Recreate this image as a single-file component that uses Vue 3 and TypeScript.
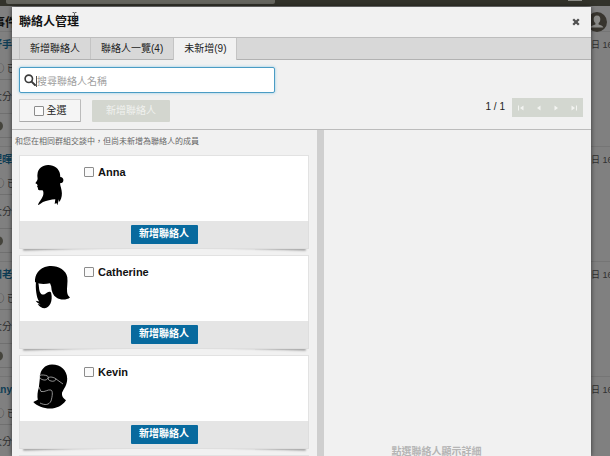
<script setup lang="ts">
import { ref, computed } from 'vue'

interface Contact {
  name: string
  kind: 'anna' | 'catherine' | 'kevin' | 'plain'
}

interface Thread {
  author: string
  date: string
}

const tabs: string[] = ['新增聯絡人', '聯絡人一覽(4)', '未新增(9)']
const activeTab = ref<number>(2)
const keyword = ref<string>('')
const selected = ref<string[]>([])

const contacts: Contact[] = [
  { name: 'Anna', kind: 'anna' },
  { name: 'Catherine', kind: 'catherine' },
  { name: 'Kevin', kind: 'kevin' },
  { name: '', kind: 'plain' },
]

const threads: Thread[] = [
  { author: '好手', date: '日 16' },
  { author: '理暉', date: '日 16' },
  { author: '和老', date: '日 16' },
  { author: 'any', date: '日 16' },
]

const allSelected = computed<boolean>({
  get: () => selected.value.length === contacts.length,
  set: (on) => {
    selected.value = on ? contacts.map((c) => c.name) : []
  },
})
</script>

<template>
  <div class="screen">
    <div class="backdrop">
      <div class="topbar">
        <div class="topbar-search"></div>
        <div class="topbar-mark"></div>
      </div>
      <div class="page-head">
        <span class="edge wide"><b>事件</b></span>
        <svg class="me" viewBox="0 0 20 20">
          <circle cx="10" cy="10" r="10" fill="#38352e" />
          <path d="M10 3.500c-2.500 0-3.500 1.800-3.300 4 .1 1.700.8 2.900 1.700 3.600v1.500c-2 .7-4 1.200-4.800 2.900h12.800c-.8-1.700-2.800-2.200-4.800-2.900v-1.500c.9-.7 1.600-1.900 1.700-3.600.2-2.200-.8-4-3.300-4z" fill="#8b8b88" />
        </svg>
      </div>
      <div v-for="t in threads" :key="t.author" class="thread">
        <div class="t-row t-name">
          <span class="edge author">{{ t.author }}</span>
          <span class="date">{{ t.date }}</span>
        </div>
        <div class="t-row t-state"><span class="edge wide">◯ 已</span></div>
        <div class="t-row t-text"><span class="edge">大分</span></div>
        <div class="t-row t-reply"><span class="dot"></span></div>
      </div>
    </div>

    <section class="modal" role="dialog" aria-labelledby="dlg-title">
      <header class="head">
        <h1 id="dlg-title">聯絡人管理</h1>
        <button class="close" type="button" aria-label="關閉">
          <svg viewBox="0 0 8 8"><path d="M1.200 1.200L6.800 6.800M6.800 1.200L1.200 6.800" stroke="#505050" stroke-width="2.300" /></svg>
        </button>
        <svg class="ibeam" viewBox="0 0 5 10">
          <path d="M.5.5h1.500l.5.6.5-.6h1.500M2.500 1v8M.5 9.500h1.500l.5-.6.5.6h1.500" fill="none" stroke="#444" stroke-width=".8" />
        </svg>
      </header>

      <nav class="tabs">
        <button
          v-for="(label, i) in tabs"
          :key="label"
          type="button"
          class="tab"
          :class="{ active: i === activeTab }"
          @click="activeTab = i"
        >{{ label }}</button>
      </nav>

      <div class="tools">
        <label class="search">
          <svg viewBox="0 0 12 12">
            <circle cx="4.800" cy="4.800" r="3.700" fill="none" stroke="#3c3c3c" stroke-width="1.600" />
            <path d="M7.600 7.600l3.400 3.400" stroke="#3c3c3c" stroke-width="2" stroke-linecap="round" />
          </svg>
          <span class="caret"></span>
          <input v-model="keyword" type="text" placeholder="搜尋聯絡人名稱" aria-label="搜尋聯絡人名稱" />
        </label>
        <div class="actions">
          <label class="all"><input v-model="allSelected" type="checkbox" />全選</label>
          <button class="add-all" type="button" disabled>新增聯絡人</button>
          <span class="count">1 / 1</span>
          <div class="pager">
            <button type="button" disabled aria-label="第一頁"><svg viewBox="0 0 6 6"><path d="M0 .5h1v5H0zM5.500.5v5L2 3z" /></svg></button>
            <button type="button" disabled aria-label="上一頁"><svg viewBox="0 0 6 6"><path d="M4.500.5v5L1 3z" /></svg></button>
            <button type="button" disabled aria-label="下一頁"><svg viewBox="0 0 6 6"><path d="M1.500.5v5L5 3z" /></svg></button>
            <button type="button" disabled aria-label="最後一頁"><svg viewBox="0 0 6 6"><path d="M5 .5h1v5H5zM.5.5v5L4 3z" /></svg></button>
          </div>
        </div>
      </div>

      <div class="body">
        <div class="list">
          <p class="hint">和您在相同群組交談中，但尚未新增為聯絡人的成員</p>
          <article v-for="c in contacts" :key="c.kind" class="card">
            <div class="card-main">
              <svg class="portrait" viewBox="0 0 50 50">
                <g v-if="c.kind === 'anna'">
                  <path d="M12.500 14C13 8.500 17.500 5.200 23 5c6-.2 11.200 3.600 12 9l.3 3c1.900.2 3.200 1.500 3.100 3.300-.1 2-1.500 3.200-3.400 3 .4 3.500 1.800 6 1.900 10 .1 4-1.300 7-2.700 8.600l-.3-2.600-1.500 6-1-2.200-1.700 1 .6-4.800c-4.300.4-8.500 1-12.300 2.800-1.500.8-2.700 2-4.500 2.800L13 44.500c1.200-3 4-5.500 5-8.700.7-2.100.5-4.300-.2-5.200-1.300-.8-3 .2-4.200-.7-.9-.7-.5-1.700-.8-2.500l-.8-.7.6-1-.5-1.500c-1-.6-2-.7-1.500-1.500.7-1 1.900-2.200 2-3.700.1-1.600-.5-3-.1-5z" />
                </g>
                <g v-else-if="c.kind === 'catherine'">
                  <path d="M10 22C9.500 15 14 7.500 23 6.200c9-1.300 18 3.200 19.300 11 .7 5-.7 10.700-.2 14.800.3 3 1.600 4.400 2.900 5.500-3.200 2.600-9.500 3-13.600.1-3.300-2.500-5-6-5.200-11.200-.2-1-.6-1.400-1.200-3.200-4.700 1-11.100 1.200-15-1.200z" />
                  <path d="M11 22l2.200.6c1.200 3.900.2 8.400 3 11.400 2 1.500 4 0 6-1.500 1.800-1 3.600-1 4 .8 1.800 7.500-1.400 14.500-6.500 15-3-.1-5.400-2-7-4.300l2.800.6c-2-1-3.500-2-4.800-3.800l3.500.7c-2.900-3.500-3.900-14.500-3.200-19.500z" />
                </g>
                <g v-else-if="c.kind === 'kevin'">
                  <path d="M15 17c0-7 5-12.500 12-12.500 9 0 15 6 15.200 14 .1 6.500-3.200 10-5.200 14.200-.4 4 1.500 5.300 4 7.500-3.500 5.500-9.500 8.300-16 8.300S12 46 8.300 42l4.500-2.300c-.7-3.500-.3-8.200 1-12z" />
                  <path d="M14.500 15.500c2-1 6-.5 8 .5 2 2-1 4.500-3.500 4-3-.5-5-2-4.500-4.500zM23 18c2-2 6-.5 8 .8 0 2-3 3-5 2.200-2-.5-3-1.500-3-3zM31 19l7 5M14 27l2 4.500c4 1 7-2.500 10-1.500 2 1 1.500 6 0 11-2 4-6 4.500-11 2" fill="none" stroke="#ccc" stroke-width=".7" />
                </g>
              </svg>
              <label class="person"><input v-model="selected" type="checkbox" :value="c.name" :aria-label="c.name" />{{ c.name }}</label>
            </div>
            <footer class="card-foot"><button class="primary" type="button">新增聯絡人</button></footer>
          </article>
        </div>
        <div class="detail"><p>點選聯絡人顯示詳細</p></div>
      </div>
    </section>
  </div>
</template>

<style>
body {
  overflow: hidden;
}
</style>

<style scoped>
* {
  box-sizing: border-box;
}
.screen {
  position: relative;
  height: 100vh;
  overflow: hidden;
  font: 10px/14px "Liberation Sans", "Noto Sans CJK TC", sans-serif;
  color: #222;
}
button,
input {
  font: inherit;
  color: inherit;
  margin: 0;
  padding: 0;
}
h1,
p {
  margin: 0;
}
.backdrop {
  background: #808080;
  height: 100%;
  overflow: hidden;
}
.topbar {
  display: flex;
  height: 6px;
  padding: 0 28px 0 6px;
  justify-content: space-between;
  background: #33332b;
}
.topbar-search {
  width: 269px;
  height: 4px;
  background: #66665f;
  border-radius: 0 0 2px 2px;
}
.topbar-mark {
  width: 14px;
  height: 1px;
  background: #8b8b86;
}
.page-head {
  display: flex;
  justify-content: space-between;
  height: 25px;
  padding-top: 6px;
}
.page-head b {
  color: #111;
  font-size: 12px;
}
.page-head .edge {
  line-height: 22px;
}
.me {
  width: 20px;
  height: 20px;
  margin-right: 3px;
}
.edge {
  display: flex;
  justify-content: flex-end;
  width: 12px;
  white-space: nowrap;
}
.edge.wide {
  width: 17px;
}
.thread {
  height: 115px;
  border-top: 1px solid #757575;
}
.t-row {
  display: flex;
  justify-content: space-between;
  align-items: center;
  border-bottom: 1px solid #707070;
  color: #303030;
}
.t-name {
  height: 26px;
  border-bottom: 0;
}
.author {
  color: #0e3d55;
  font-weight: bold;
}
.date {
  width: 19px;
  white-space: nowrap;
  font-size: 9px;
}
.t-state {
  height: 22px;
}
.t-text {
  height: 34px;
}
.t-reply {
  height: 24px;
}
.t-state,
.t-text,
.t-reply {
  margin-right: 19px;
}
.dot {
  width: 10px;
  height: 10px;
  margin-left: -7px;
  border-radius: 50%;
  background: #45443c;
}
.modal {
  position: absolute;
  top: 7px;
  left: 12px;
  right: 19px;
  bottom: 0;
  display: flex;
  flex-direction: column;
  background: #f1f1f1;
  box-shadow: 0 0 5px rgba(0, 0, 0, 0.6);
}
.head {
  position: relative;
  display: flex;
  flex: none;
  align-items: center;
  justify-content: space-between;
  height: 30px;
  padding: 0 11px 0 7px;
}
.head h1 {
  font-size: 12px;
  line-height: 16px;
  color: #111;
}
.close {
  display: flex;
  border: 0;
  background: none;
}
.close svg {
  width: 8px;
  height: 8px;
}
.ibeam {
  position: absolute;
  left: 60px;
  top: 5px;
  width: 5px;
  height: 10px;
}
.tabs {
  display: flex;
  flex: none;
  height: 23px;
  padding-left: 7px;
  background: #d8d8d8;
  border-top: 1px solid #bdbdbd;
  border-bottom: 1px solid #b2b2b2;
}
.tab {
  height: 21px;
  padding: 0 10px;
  border: 0;
  border-left: 1px solid #c4c4c4;
  background: none;
  white-space: nowrap;
}
.tab.active {
  height: 22px;
  background: #f1f1f1;
  border-right: 1px solid #c4c4c4;
}
.tools {
  flex: none;
  height: 70px;
  padding: 7px 8px 0 7px;
  border-bottom: 1px solid #bcbcbc;
}
.search {
  display: flex;
  align-items: center;
  width: 256px;
  height: 26px;
  padding: 0 4px;
  background: #fff;
  border: 1px solid #4b9cc4;
  border-radius: 2px;
  box-shadow: 0 0 3px #8cc8e6;
}
.search svg {
  width: 12px;
  height: 12px;
}
.caret {
  width: 1px;
  height: 11px;
  margin-top: 2px;
  background: #555;
}
.search input {
  flex: 1;
  min-width: 0;
  padding-top: 3px;
  border: 0;
  outline: 0;
  background: none;
}
.search input::placeholder {
  color: #a0a0a0;
}
.actions {
  display: flex;
  align-items: flex-start;
  margin-top: 6px;
}
.all {
  display: flex;
  align-items: center;
  justify-content: center;
  gap: 3px;
  width: 62px;
  height: 23px;
  border: 1px solid #d2d2d2;
  border-bottom-color: #aaa;
  border-right-color: #bbb;
  border-radius: 1px;
  background: #f5f5f5;
}
input[type="checkbox"] {
  appearance: none;
  flex: none;
  width: 10px;
  height: 10px;
  border: 1px solid #8c8c8c;
  border-radius: 1px;
  background: #fafafa;
}
input[type="checkbox"]:checked {
  background: #0a6fa3;
}
.add-all {
  width: 78px;
  height: 22px;
  margin: 1px 0 0 11px;
  border: 0;
  border-radius: 1px;
  background: #d3d6cf;
  color: #f0f1ee;
}
.count {
  margin: 1px 7px 0 auto;
}
.pager {
  display: flex;
  width: 71px;
  height: 19px;
  margin-top: -1px;
  background: #d3d7d0;
}
.pager button {
  display: flex;
  flex: 1;
  align-items: center;
  justify-content: center;
  border: 0;
  background: none;
}
.pager svg {
  width: 6px;
  height: 6px;
  fill: #f3f4f1;
}
.body {
  display: flex;
  flex: 1;
  min-height: 0;
}
.list {
  flex: none;
  width: 312px;
  padding: 0 8px 0 3px;
  overflow: hidden;
  border-right: 7px solid #cfcfcf;
}
.hint {
  height: 25px;
  font-size: 8px;
  line-height: 24px;
  color: #666;
  white-space: nowrap;
}
.card {
  position: relative;
  z-index: 0;
  height: 94px;
  margin: 0 0 6px 4px;
}
.card::before,
.card::after {
  content: "";
  position: absolute;
  z-index: -1;
  bottom: 3px;
  width: 35%;
  height: 8px;
  box-shadow: 0 3px 2px #a4a4a4;
}
.card::before {
  left: 4px;
  transform: rotate(-2deg);
}
.card::after {
  right: 4px;
  transform: rotate(2deg);
}
.card-main {
  display: flex;
  height: 66px;
  padding-left: 5px;
  background: #fff;
  border: 1px solid #e2e2e2;
  border-bottom: 0;
}
.portrait {
  width: 50px;
  height: 50px;
  margin-top: 4px;
}
.person {
  display: flex;
  align-items: center;
  gap: 4px;
  height: 14px;
  margin: 9px 0 0 9px;
  font-size: 11px;
  font-weight: bold;
  color: #111;
}
.card-foot {
  display: flex;
  align-items: center;
  justify-content: center;
  height: 28px;
  padding-bottom: 1px;
  background: #e5e5e5;
  border: 1px solid #dedede;
  border-top: 0;
}
.primary {
  width: 67px;
  height: 19px;
  border: 0;
  border-radius: 1px;
  background: #086a9e;
  color: #fff;
  font-weight: bold;
}
.detail {
  display: flex;
  flex: 1;
  flex-direction: column;
  align-items: center;
  justify-content: flex-end;
  padding-right: 42px;
}
.detail p {
  font-weight: bold;
  line-height: 8px;
  color: #b5b5b5;
  white-space: nowrap;
}
</style>
